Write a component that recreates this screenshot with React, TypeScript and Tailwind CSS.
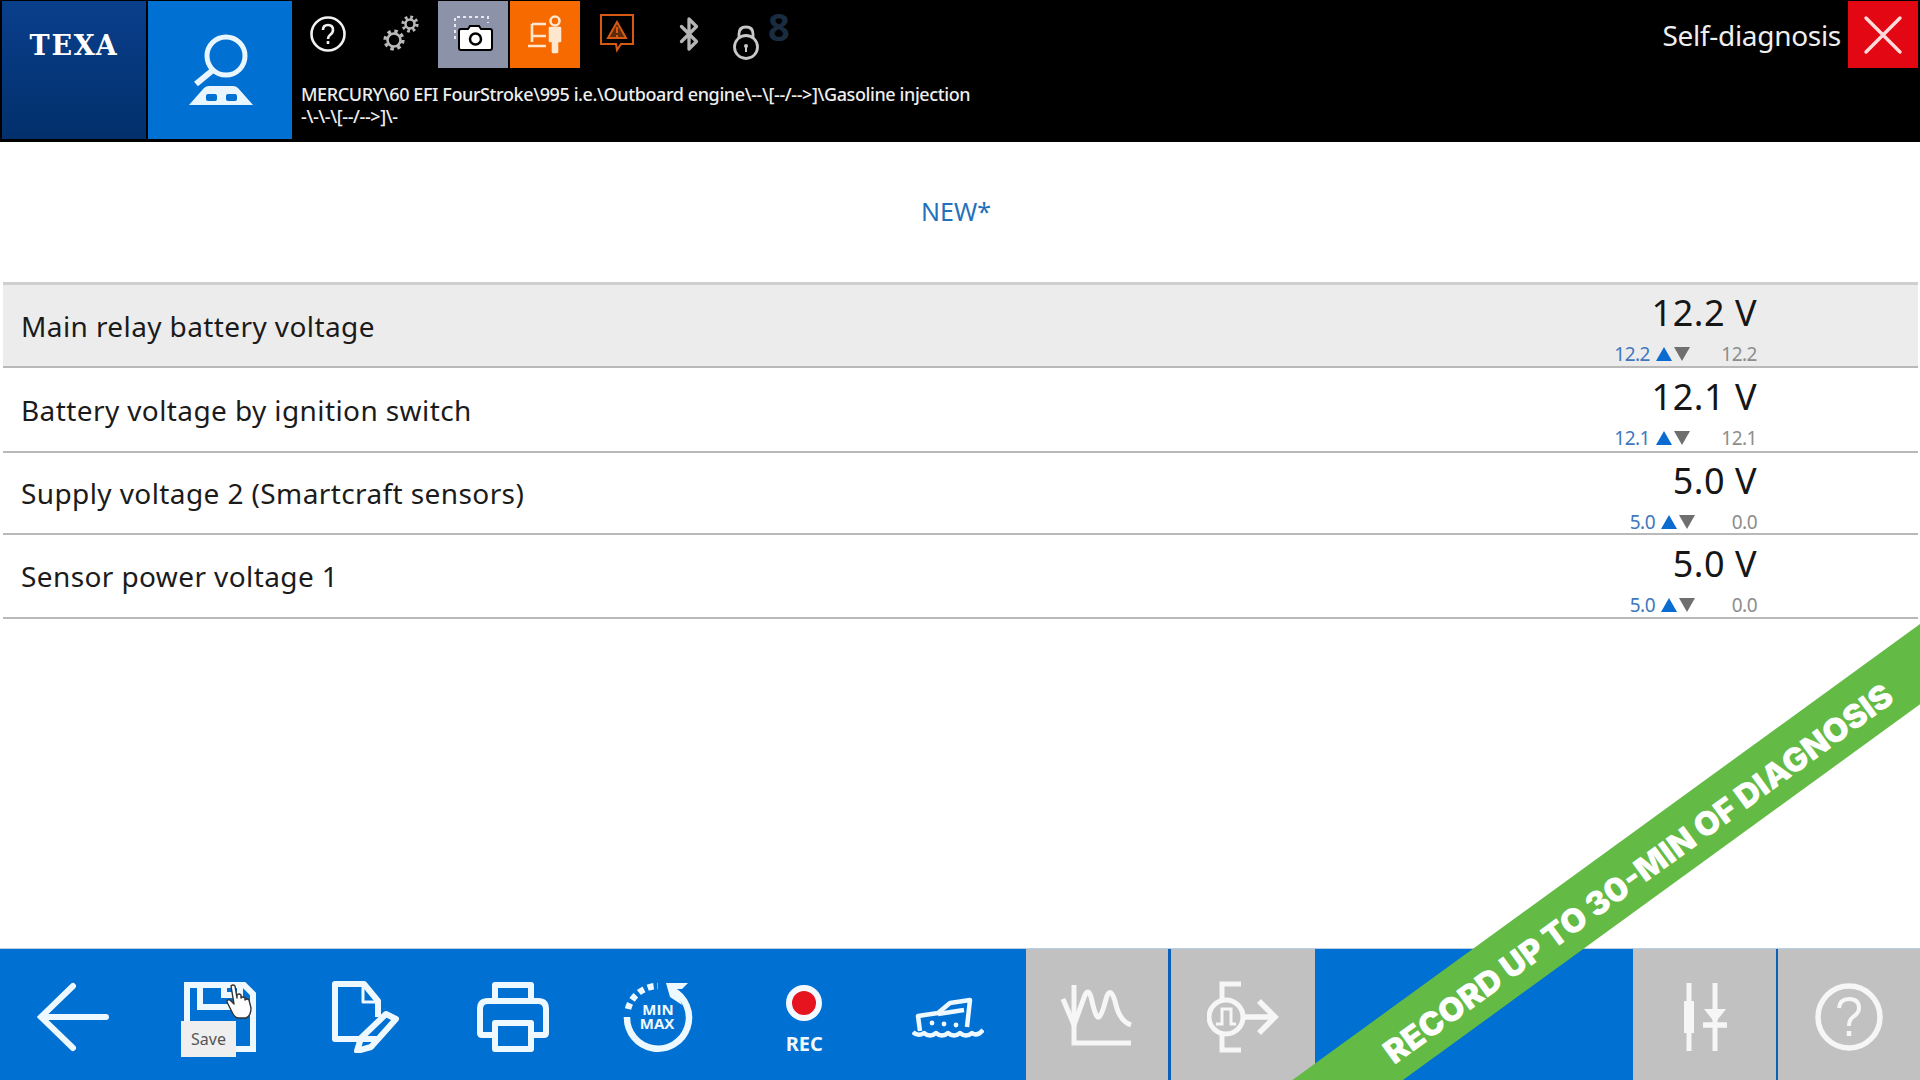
import React from "react";
import { Bluetooth } from "lucide-react";

const rows = [
  { label: "Main relay battery voltage", value: "12.2 V", live: "12.2", last: "12.2", lastCol: "w-[67px]", rowClass: "h-[83px] bg-[#ececec]" },
  { label: "Battery voltage by ignition switch", value: "12.1 V", live: "12.1", last: "12.1", lastCol: "w-[67px]", rowClass: "h-[85px]" },
  { label: "Supply voltage 2 (Smartcraft sensors)", value: "5.0 V", live: "5.0", last: "0.0", lastCol: "w-[62px]", rowClass: "h-[82px]" },
  { label: "Sensor power voltage 1", value: "5.0 V", live: "5.0", last: "0.0", lastCol: "w-[62px]", rowClass: "h-[84px]" },
];

function Gear({ cx, cy, r }: { cx: number; cy: number; r: number }) {
  const outer = r + 2.4;
  const tooth = (2 * Math.PI * outer) / 16;
  return (
    <g fill="none" stroke="#b9b9b9">
      <circle cx={cx} cy={cy} r={r} strokeWidth={2.6} />
      <circle cx={cx} cy={cy} r={outer} strokeWidth={3.4} strokeDasharray={`${tooth} ${tooth}`} />
    </g>
  );
}

// bottom bar icons, all on a 72x72 box
function BackIcon() {
  return (
    <svg width="72" height="72" viewBox="0 0 72 72" fill="none" stroke="#eef8ff" strokeWidth="6" strokeLinecap="round" strokeLinejoin="miter">
      <path d="M69 36H4M36 5L4 36l32 31" />
    </svg>
  );
}

function SaveIcon() {
  return (
    <svg width="72" height="72" viewBox="0 0 72 72" fill="none" stroke="#eef8ff" strokeWidth="6">
      <path d="M3 4H60L69 13V68H3Z" />
      <path d="M16 4V26H56V4" />
      <path d="M40 4V14H52" />
    </svg>
  );
}

function DocIcon() {
  return (
    <svg width="72" height="72" viewBox="0 0 72 72" fill="none" stroke="#eef8ff" strokeWidth="6" strokeLinejoin="round">
      <path d="M47 58H5V3H34L48 20V36" />
      <path d="M33 4V21H47" strokeWidth="3" />
      <path d="M27 70L31 57L56 33L66 38L41 66Z" />
    </svg>
  );
}

function PrintIcon() {
  return (
    <svg width="72" height="72" viewBox="0 0 72 72" fill="none" stroke="#eef8ff" strokeWidth="6" strokeLinejoin="round">
      <path d="M18 20V4H54V20" />
      <path d="M18 54H5Q3 54 3 52V28Q3 20 11 20H61Q69 20 69 28V52Q69 54 67 54H54" />
      <path d="M18 42H54V68H18Z" />
    </svg>
  );
}

function MinMaxIcon() {
  return (
    <svg width="72" height="72" viewBox="0 0 72 72" fill="none">
      <path d="M50 9A31 31 0 1 1 5 36" stroke="#eef8ff" strokeWidth="6.5" />
      <path d="M6 28A31 31 0 0 1 36 5" stroke="#eef8ff" strokeWidth="6.5" strokeDasharray="6 4" />
      <path d="M44 2H66L60 8H54L60 24L48 16Z" fill="#eef8ff" />
      <text textAnchor="middle" fontFamily="'Open Sans', sans-serif" fontWeight="700" fontSize="15" fill="#eef8ff">
        <tspan x="36" y="34">MIN</tspan>
        <tspan x="35" y="48">MAX</tspan>
      </text>
    </svg>
  );
}

function BoatIcon() {
  return (
    <svg width="72" height="44" viewBox="0 0 72 44" fill="none" stroke="#eef8ff" strokeWidth="4.5" strokeLinejoin="round">
      <path d="M8 34L6 19L26 16L38 6L58 3L55 30" />
      <path d="M26 17L52 13" />
      <path d="M1 35Q6 40 12 36Q18 41 24 36Q30 41 36 36Q42 41 48 36Q54 41 60 36Q65 40 71 33" />
      <circle cx="20" cy="26" r="2.4" fill="#eef8ff" stroke="none" />
      <circle cx="32" cy="27" r="2.4" fill="#eef8ff" stroke="none" />
      <circle cx="44" cy="28" r="2.4" fill="#eef8ff" stroke="none" />
    </svg>
  );
}

function ChartIcon() {
  return (
    <svg width="72" height="72" viewBox="0 0 72 72" fill="none" stroke="#f6f6f6" strokeWidth="5">
      <path d="M13 4V62H70" />
      <path d="M2 18L13 44L24 14Q28 6 31 20Q35 38 38 36Q41 34 45 18Q49 4 54 20Q58 40 70 44" />
    </svg>
  );
}

function SignalIcon() {
  return (
    <svg width="72" height="72" viewBox="0 0 72 72" fill="none" stroke="#f6f6f6" strokeWidth="5">
      <path d="M34 3H15V20M15 52V69H34" />
      <circle cx="19" cy="36" r="17" />
      <path d="M9 43H15V28H24V43H29" strokeWidth="3" />
      <path d="M38 36H66M52 20L68 36L52 52" strokeWidth="5.5" />
    </svg>
  );
}

function FilterIcon() {
  return (
    <svg width="52" height="72" viewBox="0 0 52 72" fill="none" stroke="#f6f6f6" strokeWidth="5">
      <path d="M10 2V70M36 2V70" />
      <rect x="5" y="20" width="10" height="32" fill="#f6f6f6" stroke="none" />
      <path d="M25 28H47L36 42Z" fill="#f6f6f6" stroke="none" />
      <path d="M24 44H48" strokeWidth="5.5" />
    </svg>
  );
}

function HelpBigIcon() {
  return (
    <svg width="72" height="72" viewBox="0 0 72 72" fill="none" stroke="#f6f6f6" strokeWidth="5.5">
      <circle cx="36" cy="36" r="31" />
      <path d="M26 27Q27 18 36 18Q46 18 46 27Q46 32 40 36Q36 39 36 45" strokeWidth="4" />
      <path d="M36 50V55" strokeWidth="4.5" />
    </svg>
  );
}

export default function App() {
  return (
    <div className="relative flex h-[1080px] w-[1920px] flex-col overflow-hidden bg-white font-['Noto_Sans',sans-serif]">
      {/* Top bar */}
      <header className="flex h-[142px] shrink-0 bg-black">
        <div className="mt-px ml-0.5 flex h-[138px] w-[144px] justify-center bg-gradient-to-b from-[#0a3f8c] to-[#03306c] pt-[27px]">
          <span className="font-['DejaVu_Serif',serif] text-[27px] leading-[36px] font-bold tracking-[1.8px] text-white">TEXA</span>
        </div>
        <div className="mt-px ml-0.5 h-[138px] w-[144px] bg-[#0070d3]">
          <svg width="144" height="138" viewBox="0 0 144 138" fill="none" stroke="#eaf6ff" strokeWidth="5">
            <circle cx="78" cy="55" r="19" />
            <path d="M65 69L48 83" strokeWidth="6" />
            <path d="M41 104L56 87Q58 85 61 85H85Q88 85 90 87L105 104Z" fill="#eaf6ff" stroke="none" />
            <rect x="58" y="93" width="11" height="7" rx="2" fill="#0070d3" stroke="none" />
            <rect x="78" y="93" width="11" height="7" rx="2" fill="#0070d3" stroke="none" />
          </svg>
        </div>

        <div className="flex min-w-0 flex-1 flex-col">
          <div className="flex h-[70px] items-start">
            <div className="flex h-[70px] w-[72px] items-center justify-center pb-[2px]">
              <svg width="38" height="38" viewBox="0 0 38 38" fill="none" stroke="#f1f1f1" strokeWidth="2.6">
                <circle cx="19" cy="19" r="16.5" />
                <path d="M14 15Q14 10 19 10Q24 10 24 15Q24 18 21 20Q19 21.5 19 24" />
                <path d="M19 26V29" />
              </svg>
            </div>
            <div className="flex h-[70px] w-[72px] items-center justify-center pb-[2px]">
              <svg width="40" height="40" viewBox="0 0 40 40">
                <Gear cx={14} cy={26} r={6.5} />
                <Gear cx={30} cy={10} r={4.5} />
              </svg>
            </div>
            <div className="mt-px ml-0.5 flex h-[67px] w-[70px] items-center justify-center bg-[#8c93a8]">
              <svg width="42" height="40" viewBox="0 0 42 40" fill="none">
                <path d="M3 24V2H36V8" stroke="#e8e8ee" strokeWidth="2" strokeDasharray="3 3" />
                <path d="M9 14H16L18 11H27L29 14H38Q40 14 40 16V33Q40 35 38 35H9Q7 35 7 33V16Q7 14 9 14Z" fill="#fff" stroke="#000" strokeWidth="2" />
                <circle cx="23.5" cy="24" r="5.5" stroke="#000" strokeWidth="2.5" />
              </svg>
            </div>
            <div className="mt-px ml-0.5 flex h-[67px] w-[70px] items-center justify-center bg-[#f66a00]">
              <svg width="38" height="42" viewBox="0 0 38 42" fill="none" stroke="#ffe6cf" strokeWidth="2.6" strokeLinejoin="round">
                <path d="M6 10H20M6 10V28M20 22H6M2 32H20" />
                <circle cx="29" cy="7" r="4.5" />
                <path d="M24 14H34V27H31V38H27V27H24Z" fill="#ffe6cf" />
              </svg>
            </div>
            <div className="flex h-[68px] w-[74px] items-center justify-center pb-[2px]">
              <svg width="36" height="40" viewBox="0 0 36 40" fill="none" stroke="#d75a14" strokeWidth="2">
                <path d="M2 2H34V31H22L18 37L17 31H2Z" />
                <path d="M18 9L27 25H9Z" fill="#5e2a0c" strokeWidth="2" />
                <path d="M18 14V20M18 22V24" stroke="#d75a14" />
              </svg>
            </div>
            <div className="flex h-[68px] w-[70px] items-center justify-center">
              <Bluetooth size={36} strokeWidth={2.2} color="#b5b5b5" />
            </div>
            <div className="relative flex h-[70px] w-[44px] items-center justify-center pt-[16px]">
              <svg width="28" height="38" viewBox="0 0 28 38" fill="none" stroke="#c8c8c8" strokeWidth="2.8">
                <circle cx="14" cy="23" r="11.5" />
                <path d="M7 14V10Q7 3 14 3Q21 3 21 10V14" />
                <circle cx="14" cy="22" r="2" fill="#c8c8c8" stroke="none" />
                <path d="M14 23V28" strokeWidth="2" />
              </svg>
              <span className="absolute top-[4px] left-[44px] text-[38px] leading-[44px] font-bold text-[#1a2c40]">8</span>
            </div>
            <div className="flex-1" />
            <span className="mr-[7px] text-[28px] leading-[70px] tracking-[-0.3px] text-[#eeeeee]">Self-diagnosis</span>
            <div className="mt-px mr-0.5 flex h-[67px] w-[70px] items-center justify-center bg-[#e30613]">
              <svg width="40" height="40" viewBox="0 0 40 40" stroke="#ffdcdc" strokeWidth="3.4" strokeLinecap="round">
                <path d="M3 3L37 37M37 3L3 37" />
              </svg>
            </div>
          </div>
          <div className="mt-[13px] pl-[9px] text-[18px] leading-[22px] font-medium tracking-[-0.4px] text-[#eeeeee]">
            <div>MERCURY\60 EFI FourStroke\995 i.e.\Outboard engine\--\[--/--&gt;]\Gasoline injection</div>
            <div>-\-\-\[--/--&gt;]\-</div>
          </div>
        </div>
      </header>

      {/* Data list */}
      <main className="min-h-0 flex-1">
        <div className="flex h-[140px] items-center justify-center text-[25px] text-[#2470bd]">
          <span className="ml-[-8px]">NEW*</span>
        </div>
        <div className="mr-0.5 ml-[3px] border-t-[3px] border-[#cfcfcf]">
          {rows.map((row) => (
            <div key={row.label} className={`flex items-center border-b-2 border-[#b9b9b9] pr-[161px] pl-[18px] ${row.rowClass}`}>
              <span className="flex-1 text-[28px] tracking-[0.4px] text-[#1b1b1b]">{row.label}</span>
              <div className="flex flex-col items-end pt-[6px]">
                <span className="text-[36px] leading-[44px] tracking-[0.5px] text-[#161616]">{row.value}</span>
                <div className="mt-[7px] flex items-center text-[19px] leading-[24px] tracking-[-0.5px]">
                  <span className="mr-[6px] text-[#3f78bd]">{row.live}</span>
                  <span className="h-0 w-0 border-x-[8px] border-b-[14px] border-x-transparent border-b-[#0a6bd0]" />
                  <span className="ml-[2px] h-0 w-0 border-x-[8px] border-t-[14px] border-x-transparent border-t-[#6f6f6f]" />
                  <span className={`text-right text-[#8d8d8d] ${row.lastCol}`}>{row.last}</span>
                </div>
              </div>
            </div>
          ))}
        </div>
      </main>

      {/* Bottom toolbar */}
      <footer className="flex h-[132px] shrink-0 border-t border-[#b8cfe6] bg-[#0070d3]">
        <div className="flex w-[146.6px] items-center justify-center pt-[5px]"><BackIcon /></div>
        <div className="flex w-[146.6px] items-center justify-center pt-[5px]"><SaveIcon /></div>
        <div className="flex w-[146.6px] items-center justify-center pt-[5px]"><DocIcon /></div>
        <div className="flex w-[146.6px] items-center justify-center pt-[5px]"><PrintIcon /></div>
        <div className="flex w-[146.6px] items-center justify-center pt-[5px] pr-[4px]"><MinMaxIcon /></div>
        <div className="flex w-[146.6px] flex-col items-center justify-center pt-[12px] pr-[4px]">
          <span className="h-[36px] w-[36px] rounded-full border-[6px] border-[#f3f9ff] bg-[#e5141f]" />
          <span className="mt-[10px] text-[20px] leading-[26px] font-bold text-[#eef8ff]">REC</span>
        </div>
        <div className="flex w-[146.6px] items-center justify-center pt-[8px] pr-[10px]"><BoatIcon /></div>
        <div className="flex w-[142px] items-center justify-center bg-[#c1c1c1] pt-[5px]"><ChartIcon /></div>
        <div className="w-[3px] bg-[#0a5fb8]" />
        <div className="flex w-[144px] items-center justify-center bg-[#c1c1c1] pt-[5px]"><SignalIcon /></div>
        <div className="flex-1" />
        <div className="flex w-[143px] items-center justify-center bg-[#c1c1c1] pt-[5px]"><FilterIcon /></div>
        <div className="w-[2px] bg-[#0a5fb8]" />
        <div className="flex w-[142px] items-center justify-center bg-[#c1c1c1] pt-[5px]"><HelpBigIcon /></div>
      </footer>

      {/* Save tooltip + hand cursor */}
      <div className="absolute top-[1021px] left-[181px] flex h-[36px] w-[55px] items-center justify-center bg-[#efefef] text-[16px] text-[#555555]">
        Save
      </div>
      <svg className="absolute top-[984px] left-[226px]" width="28" height="36" viewBox="0 0 28 36" fill="#fff" stroke="#333" strokeWidth="1.4" strokeLinejoin="round">
        <path d="M5 2Q7 0 9 2L11 14V11Q13 9 15 11V14Q17 12 19 14V16Q21 14 23 16L25 24Q25 32 20 34H12Q8 33 6 28L1 18Q1 15 4 16L8 20Z" />
      </svg>

      {/* Promo ribbon */}
      <div className="absolute top-[838px] left-[1036px] flex h-[65px] w-[1200px] -rotate-[36deg] items-center justify-center bg-[#63bb45]">
        <span className="pt-[8px] font-['Inter',sans-serif] text-[32.8px] font-black text-white">RECORD UP TO 30-MIN OF DIAGNOSIS</span>
      </div>
    </div>
  );
}
